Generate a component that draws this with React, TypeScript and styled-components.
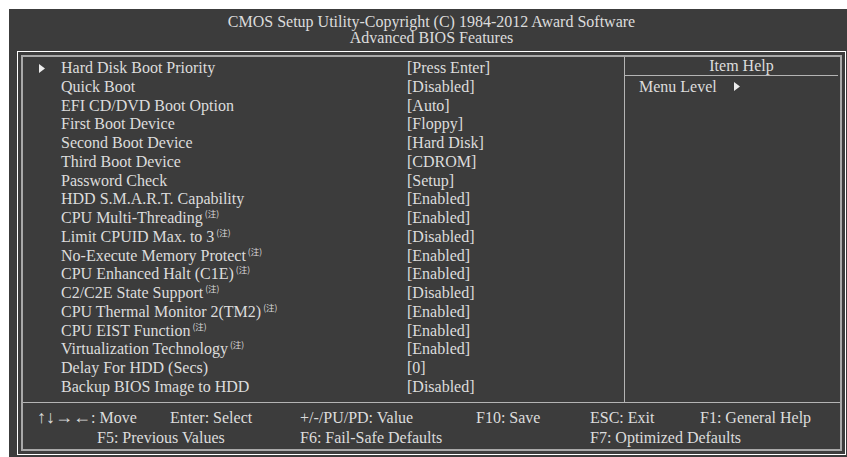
import styled, { createGlobalStyle } from 'styled-components';

const GlobalStyle = createGlobalStyle`
  html, body {
    margin: 0;
    padding: 0;
    background: #ffffff;
  }
  body {
    font-family: "Liberation Serif", "Times New Roman", serif;
  }
`;

const Page = styled.div`
  padding: 9px 0 0 9px;
  width: 847px;
  height: 457px;
  box-sizing: border-box;
`;

const Screen = styled.div`
  display: flex;
  flex-direction: column;
  background: #3c3c3c;
  color: #dcdcdc;
  height: 448px;
  padding: 0 1px 2px 8px;
  box-sizing: border-box;
`;

const Title = styled.header`
  height: 42px;
  padding-top: 5px;
  box-sizing: border-box;
  text-align: center;
  font-size: 16px;
  line-height: 16px;
`;

const OuterFrame = styled.div`
  flex: 1;
  border: 1px solid #ffffff;
  padding: 3px;
  display: flex;
`;

const InnerFrame = styled.div`
  flex: 1;
  border: 2px solid #a9a9a9;
  display: flex;
  flex-direction: column;
`;

const Body = styled.div`
  display: grid;
  grid-template-columns: 602px 1fr;
  height: 345px;
  border-bottom: 1px solid #b4b4b4;
`;

const List = styled.div`
  padding-top: 2px;
  font-size: 16px;
  border-right: 1px solid #b4b4b4;
`;

const Row = styled.div`
  display: grid;
  grid-template-columns: 38px 346px 1fr;
  height: 18.75px;
  line-height: 18.75px;
  white-space: nowrap;
`;

const Pointer = styled.span`
  display: flex;
  align-items: center;
  padding-left: 16px;
`;

const Note = styled.sup`
  font-family: "Noto Sans CJK SC", sans-serif;
  font-size: 8.5px;
  vertical-align: 6px;
  line-height: 0;
  margin-left: 2px;
`;

const Help = styled.div`
  display: flex;
  flex-direction: column;
  font-size: 16px;
`;

const HelpHead = styled.div`
  height: 18px;
  line-height: 18px;
  text-align: center;
  padding-left: 20px;
  border-bottom: 1px solid #b4b4b4;
  margin-right: 2px;
`;

const HelpLine = styled.div`
  display: flex;
  align-items: center;
  gap: 17px;
  padding-left: 14px;
  height: 19px;
  margin-top: 1px;
`;

const Footer = styled.footer`
  flex: 1;
  padding-top: 5px;
  font-size: 16px;
`;

const FooterLine = styled.div<{ $indent: number }>`
  display: flex;
  height: 20px;
  line-height: 20px;
  padding-left: ${(p) => p.$indent}px;
  white-space: nowrap;
`;

const Key = styled.span<{ $w?: number }>`
  flex: ${(p) => (p.$w ? `0 0 ${p.$w}px` : '1')};
`;

const Arrows = styled.span`
  font-size: 18px;
  line-height: 0;
`;

const Arrow = () => (
  <svg width="6" height="9" viewBox="0 0 6 9">
    <polygon points="0,0 6,4.5 0,9" fill="#ededed" />
  </svg>
);

type Item = { label: string; value: string; note?: boolean; sub?: boolean };

const items: Item[] = [
  { label: 'Hard Disk Boot Priority', value: '[Press Enter]', sub: true },
  { label: 'Quick Boot', value: '[Disabled]' },
  { label: 'EFI CD/DVD Boot Option', value: '[Auto]' },
  { label: 'First Boot Device', value: '[Floppy]' },
  { label: 'Second Boot Device', value: '[Hard Disk]' },
  { label: 'Third Boot Device', value: '[CDROM]' },
  { label: 'Password Check', value: '[Setup]' },
  { label: 'HDD S.M.A.R.T. Capability', value: '[Enabled]' },
  { label: 'CPU Multi-Threading', value: '[Enabled]', note: true },
  { label: 'Limit CPUID Max. to 3', value: '[Disabled]', note: true },
  { label: 'No-Execute Memory Protect', value: '[Enabled]', note: true },
  { label: 'CPU Enhanced Halt (C1E)', value: '[Enabled]', note: true },
  { label: 'C2/C2E State Support', value: '[Disabled]', note: true },
  { label: 'CPU Thermal Monitor 2(TM2)', value: '[Enabled]', note: true },
  { label: 'CPU EIST Function', value: '[Enabled]', note: true },
  { label: 'Virtualization Technology', value: '[Enabled]', note: true },
  { label: 'Delay For HDD (Secs)', value: '[0]' },
  { label: 'Backup BIOS Image to HDD', value: '[Disabled]' },
];

export default function App() {
  return (
    <>
      <GlobalStyle />
      <Page>
        <Screen>
          <Title>
            CMOS Setup Utility-Copyright (C) 1984-2012 Award Software
            <br />
            Advanced BIOS Features
          </Title>
          <OuterFrame>
            <InnerFrame>
              <Body>
                <List>
                  {items.map((it) => (
                    <Row key={it.label}>
                      <Pointer>{it.sub && <Arrow />}</Pointer>
                      <span>
                        {it.label}
                        {it.note && <Note>(注)</Note>}
                      </span>
                      <span>{it.value}</span>
                    </Row>
                  ))}
                </List>
                <Help>
                  <HelpHead>Item Help</HelpHead>
                  <HelpLine>
                    <span>Menu Level</span>
                    <Arrow />
                  </HelpLine>
                </Help>
              </Body>
              <Footer>
                <FooterLine $indent={14}>
                  <Key $w={133}>
                    <Arrows>↑↓→←</Arrows>: Move
                  </Key>
                  <Key $w={130}>Enter: Select</Key>
                  <Key $w={176}>+/-/PU/PD: Value</Key>
                  <Key $w={114}>F10: Save</Key>
                  <Key $w={110}>ESC: Exit</Key>
                  <Key>F1: General Help</Key>
                </FooterLine>
                <FooterLine $indent={74}>
                  <Key $w={203}>F5: Previous Values</Key>
                  <Key $w={290}>F6: Fail-Safe Defaults</Key>
                  <Key>F7: Optimized Defaults</Key>
                </FooterLine>
              </Footer>
            </InnerFrame>
          </OuterFrame>
        </Screen>
      </Page>
    </>
  );
}
